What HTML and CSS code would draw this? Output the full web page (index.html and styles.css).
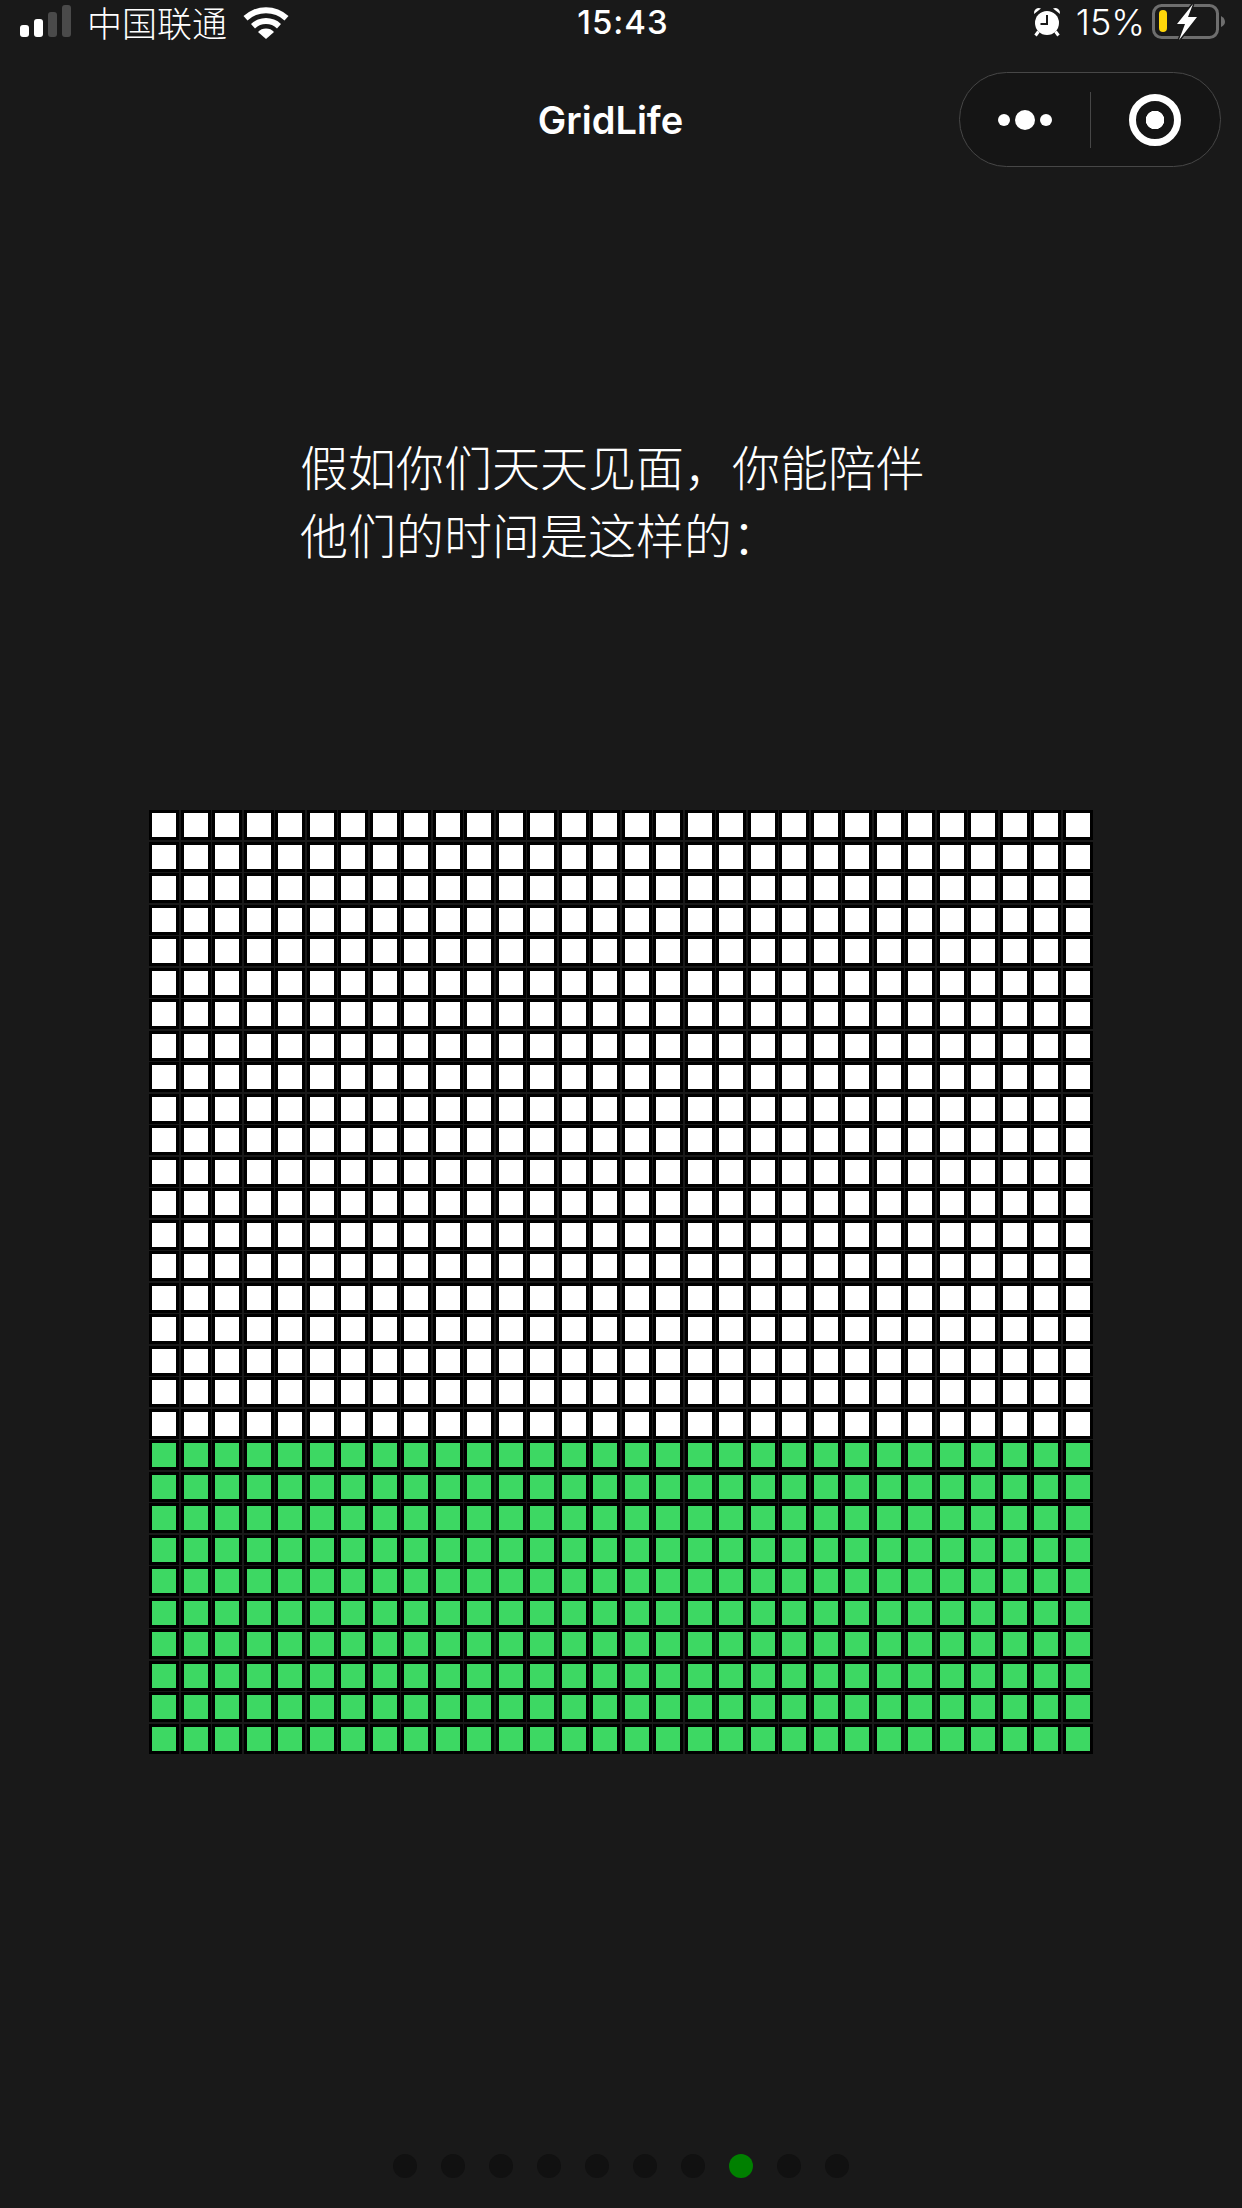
FILE: index.html
```html
<!DOCTYPE html>
<html lang="zh-CN">
<head>
    <meta charset="UTF-8">
    <meta name="viewport" content="width=device-width, initial-scale=1.0">
    <title>GridLife</title>
    <link rel="stylesheet" href="styles.css">
</head>
<body>
    <header class="status-bar">
        <div class="status-left">
            <svg class="signal" width="52" height="34" viewBox="0 0 52 34">
                <rect x="0" y="20" width="9" height="12" rx="3" fill="#fff"/>
                <rect x="14" y="14" width="9" height="18" rx="3" fill="#fff"/>
                <rect x="28" y="7" width="9" height="25" rx="3" fill="#4a4a4a"/>
                <rect x="42" y="0" width="9" height="32" rx="3" fill="#4a4a4a"/>
            </svg>
            <span class="carrier">中国联通</span>
            <svg class="wifi" width="46" height="34" viewBox="0 0 46 34">
                <path d="M0.5 11 A33 33 0 0 1 45.5 11 L41.5 15.5 A27 27 0 0 0 4.5 15.5 Z" fill="#fff"/>
                <path d="M8 19 A22 22 0 0 1 38 19 L34 23.5 A16 16 0 0 0 12 23.5 Z" fill="#fff"/>
                <path d="M15 27 A11 11 0 0 1 31 27 L23 34 Z" fill="#fff"/>
            </svg>
        </div>
        <div class="status-time">15:43</div>
        <div class="status-right">
            <svg class="alarm" width="28" height="30" viewBox="0 0 28 30">
                <path d="M1 7 A5 5 0 0 1 8 1.5 Z M27 7 A5 5 0 0 0 20 1.5 Z" fill="#fff"/>
                <circle cx="14" cy="16" r="12" fill="#fff"/>
                <path d="M14 8 V17 H7.5" fill="none" stroke="#191919" stroke-width="2"/>
                <path d="M5.5 24.5 L2.5 28.5 M22.5 24.5 L25.5 28.5" stroke="#fff" stroke-width="3"/>
            </svg>
            <span class="battery-text">15%</span>
            <svg class="battery" width="74" height="36" viewBox="0 0 74 36">
                <rect x="1.5" y="1.5" width="64" height="32" rx="8" fill="none" stroke="#6e6e6e" stroke-width="3"/>
                <path d="M69 12 Q73 14 73 18 Q73 21 69 23 Z" fill="#6e6e6e"/>
                <rect x="7" y="6" width="8" height="22" rx="4" fill="#ffd60a"/>
                <path d="M41 0 L25 20 H33 L27 36 L45 13 H36 Z" fill="#fff" stroke="#191919" stroke-width="3" paint-order="stroke"/>
            </svg>
        </div>
    </header>

    <nav class="nav-bar">
        <h1 class="nav-title">GridLife</h1>
        <div class="capsule">
            <div class="capsule-more">
                <span class="dot-small"></span>
                <span class="dot-big"></span>
                <span class="dot-small"></span>
            </div>
            <div class="capsule-line"></div>
            <div class="capsule-close">
                <span class="close-ring"></span>
            </div>
        </div>
    </nav>

    <main>
        <p class="intro">假如你们天天见面，你能陪伴<br>他们的时间是这样的：</p>
        <section class="life-grid" id="life-grid"></section>
    </main>

    <footer class="pager" id="pager"></footer>

    <script src="grid.js"></script>
</body>
</html>
```
FILE: styles.css
```css
body {
    font-family: "Noto Sans CJK SC", "Noto Sans", sans-serif;
    background-color: #191919;
    color: #fff;
    margin: 0;
    padding: 0;
}

.status-bar {
    display: grid;
    grid-template-columns: 1fr auto 1fr;
    align-items: center;
    height: 44px;
    padding: 0 16px 0 20px;
}

.status-left {
    display: flex;
    align-items: center;
}

.carrier {
    font-size: 35px;
    font-weight: 300;
    line-height: 44px;
    margin-left: 15px;
}

.wifi {
    margin-left: 16px;
}

.status-time {
    font-family: Inter, sans-serif;
    font-size: 33px;
    font-weight: 500;
    letter-spacing: 1px;
}

.status-right {
    display: flex;
    align-items: center;
    justify-content: flex-end;
}

.battery-text {
    font-family: Inter, sans-serif;
    font-size: 36px;
    font-weight: 300;
    margin: 0 7px 0 15px;
}

.nav-bar {
    display: grid;
    grid-template-columns: 1fr auto 1fr;
    align-items: center;
    padding: 28px 21px 0 0;
}

.nav-title {
    grid-column: 2;
    margin: 0;
    font-family: Inter, sans-serif;
    font-size: 38px;
    font-weight: 600;
}

.capsule {
    grid-column: 3;
    justify-self: end;
    display: flex;
    align-items: center;
    box-sizing: border-box;
    width: 262px;
    height: 95px;
    border: 1.5px solid #474747;
    border-radius: 48px;
    background-color: #151515;
}

.capsule-more {
    flex: 1;
    display: flex;
    align-items: center;
    justify-content: center;
    gap: 5px;
}

.dot-small {
    width: 12px;
    height: 12px;
    border-radius: 50%;
    background: #fff;
}

.dot-big {
    width: 20px;
    height: 20px;
    border-radius: 50%;
    background: #fff;
}

.capsule-line {
    width: 1px;
    height: 56px;
    background-color: #474747;
}

.capsule-close {
    flex: 1;
    display: flex;
    align-items: center;
    justify-content: center;
}

.close-ring {
    display: block;
    box-sizing: border-box;
    width: 52px;
    height: 52px;
    border: 7px solid #fff;
    border-radius: 50%;
    background: radial-gradient(circle, #fff 0 9px, transparent 9.5px);
}

.intro {
    margin: 264px 0 0 300px;
    font-size: 48px;
    font-weight: 300;
    line-height: 68px;
}

.life-grid {
    display: grid;
    grid-template-columns: repeat(30, 30px);
    grid-template-rows: repeat(30, 30px);
    justify-content: space-between;
    align-content: space-between;
    width: 944px;
    height: 944px;
    margin: 243px 0 0 149px;
}

.cell {
    box-sizing: border-box;
    border: 3px solid #000;
    background-color: #fff;
}

.cell.done {
    background-color: #3dd863;
}

.pager {
    display: flex;
    justify-content: center;
    gap: 24px;
    margin-top: 400px;
    padding-bottom: 30px;
}

.pager-dot {
    width: 24px;
    height: 24px;
    border-radius: 50%;
    background-color: #111;
}

.pager-dot.active {
    background-color: #008000;
}
```
FILE: grid.js
```js
// 30x30 grid, last 10 rows are green
var grid = document.getElementById('life-grid');
for (var i = 0; i < 900; i++) {
    var cell = document.createElement('div');
    cell.className = i >= 600 ? 'cell done' : 'cell';
    grid.appendChild(cell);
}

// pager dots, 8th is the current page
var pager = document.getElementById('pager');
for (var j = 0; j < 10; j++) {
    var dot = document.createElement('div');
    dot.className = j === 7 ? 'pager-dot active' : 'pager-dot';
    pager.appendChild(dot);
}
```
